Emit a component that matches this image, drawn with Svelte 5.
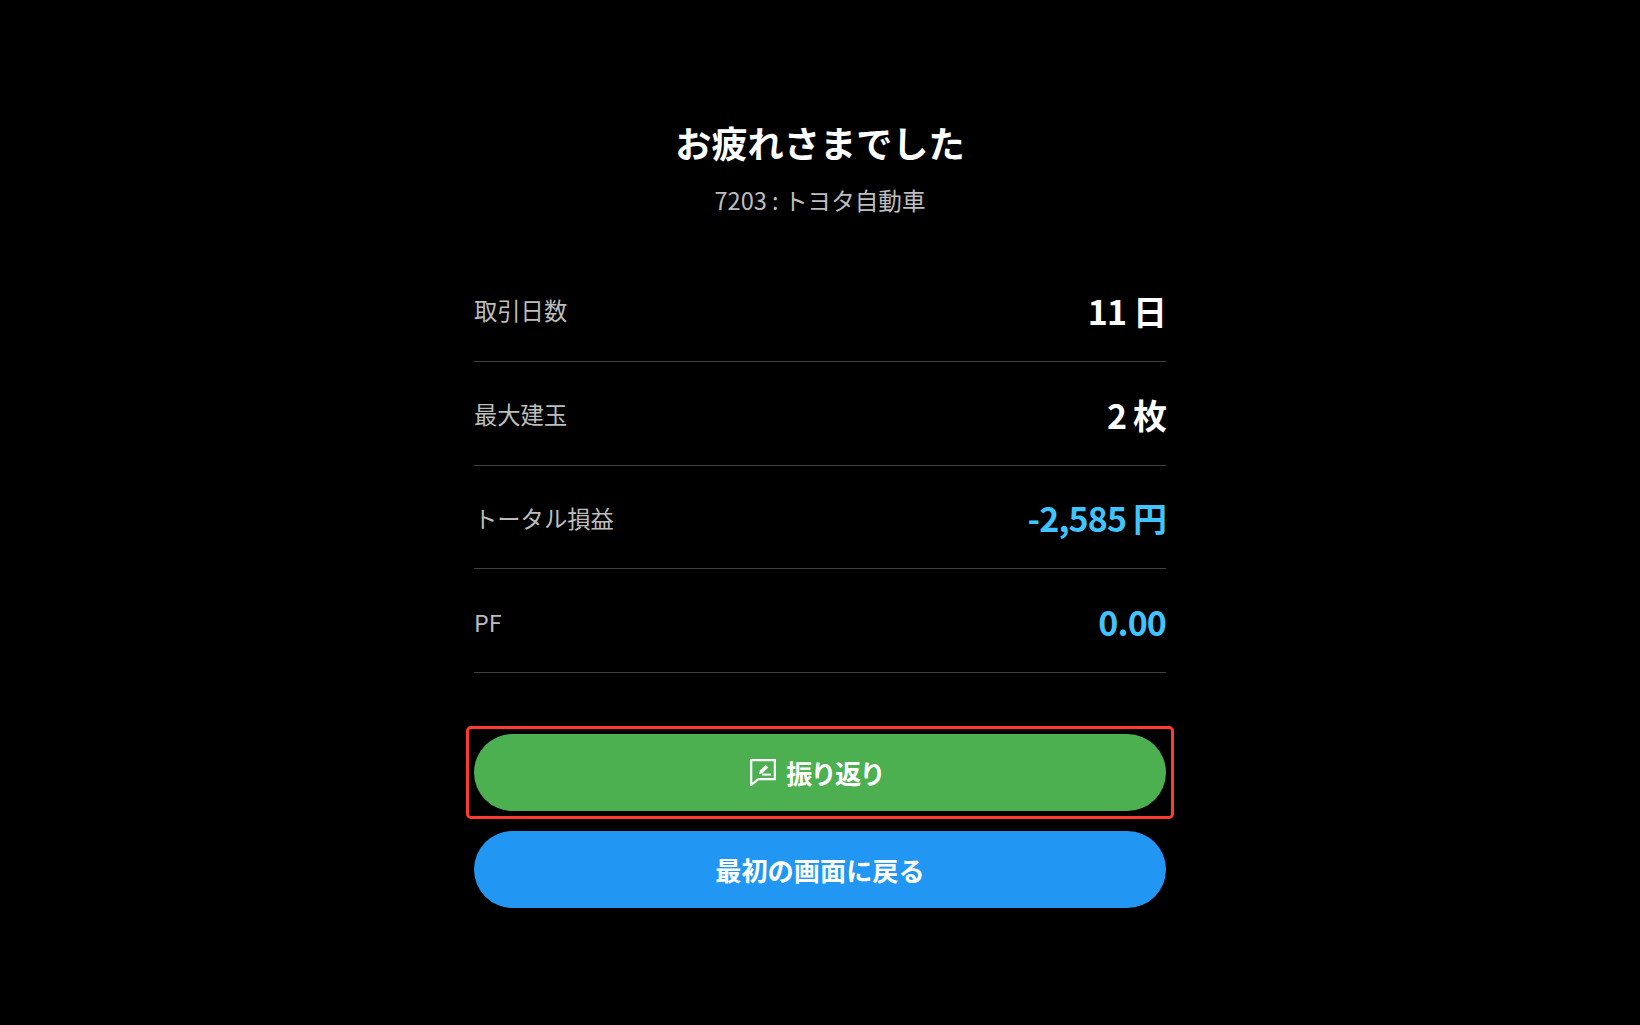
<script>
	const rows = [
		{ label: '取引日数', value: '11 日', tone: 'plain' },
		{ label: '最大建玉', value: '2 枚', tone: 'plain' },
		{ label: 'トータル損益', value: '-2,585 円', tone: 'minus' },
		{ label: 'PF', value: '0.00', tone: 'minus' }
	];
</script>

<main class="page">
	<h1>お疲れさまでした</h1>
	<p class="stock">7203 : トヨタ自動車</p>

	<dl class="stats">
		{#each rows as row}
			<div class="row">
				<dt>{row.label}</dt>
				<dd class={row.tone}>{row.value}</dd>
			</div>
		{/each}
	</dl>

	<div class="actions">
		<div class="highlight">
			<button class="btn review">
				<svg viewBox="0 0 26 27" width="26" height="27" fill="none" stroke="#fff" aria-hidden="true">
					<path d="M1.2 1.2h23.6v19H8.4L1.2 26z" stroke-width="2.2" />
					<path d="M8.8 15.4l1.2-4 5.6-5.4 2.7 2.6-5.6 5.5z" fill="#fff" stroke="none" />
					<path d="M12 15.6h9" stroke-width="2" />
				</svg>
				<span class="tight">振り返り</span>
			</button>
		</div>
		<button class="btn back">最初の画面に戻る</button>
	</div>
</main>

<style>
	:global(body) {
		background: #000;
	}

	.page {
		width: 692px;
		margin: 0 auto;
		padding-top: 115px;
		font-family: 'Noto Sans CJK JP', sans-serif;
		color: #fff;
	}

	h1 {
		margin: 0;
		font-size: 36.2px;
		line-height: 54px;
		font-weight: 700;
		text-align: center;
	}

	.stock {
		margin: 14px 0 0;
		font-size: 23.6px;
		line-height: 34px;
		color: #bdbdbd;
		text-align: center;
	}

	.stats {
		margin: 41px 0 0;
	}

	.row {
		display: flex;
		align-items: center;
		justify-content: space-between;
		height: 103.8px;
		padding-top: 2px;
		box-sizing: border-box;
		border-bottom: 1px solid #424242;
	}

	dt {
		font-size: 23.3px;
		color: #bdbdbd;
	}

	dd {
		margin: 0;
		font-size: 34px;
		font-weight: 700;
		letter-spacing: -0.9px;
	}

	.minus {
		color: #40c4ff;
	}

	.actions {
		display: flex;
		flex-direction: column;
		gap: 20px;
		margin-top: 61px;
	}

	.highlight {
		margin: -8px;
		padding: 5px;
		border: 3px solid #ff3b30;
		border-radius: 5px;
	}

	.btn {
		display: flex;
		align-items: center;
		justify-content: center;
		gap: 10px;
		width: 100%;
		height: 77px;
		border: 0;
		border-radius: 39px;
		font-family: inherit;
		font-size: 26.2px;
		font-weight: 700;
		color: #fff;
	}

	.tight {
		letter-spacing: -1.8px;
	}

	.review {
		padding: 0 6px 0 0;
		background: #4caf50;
	}

	.back {
		background: #2196f3;
	}
</style>
